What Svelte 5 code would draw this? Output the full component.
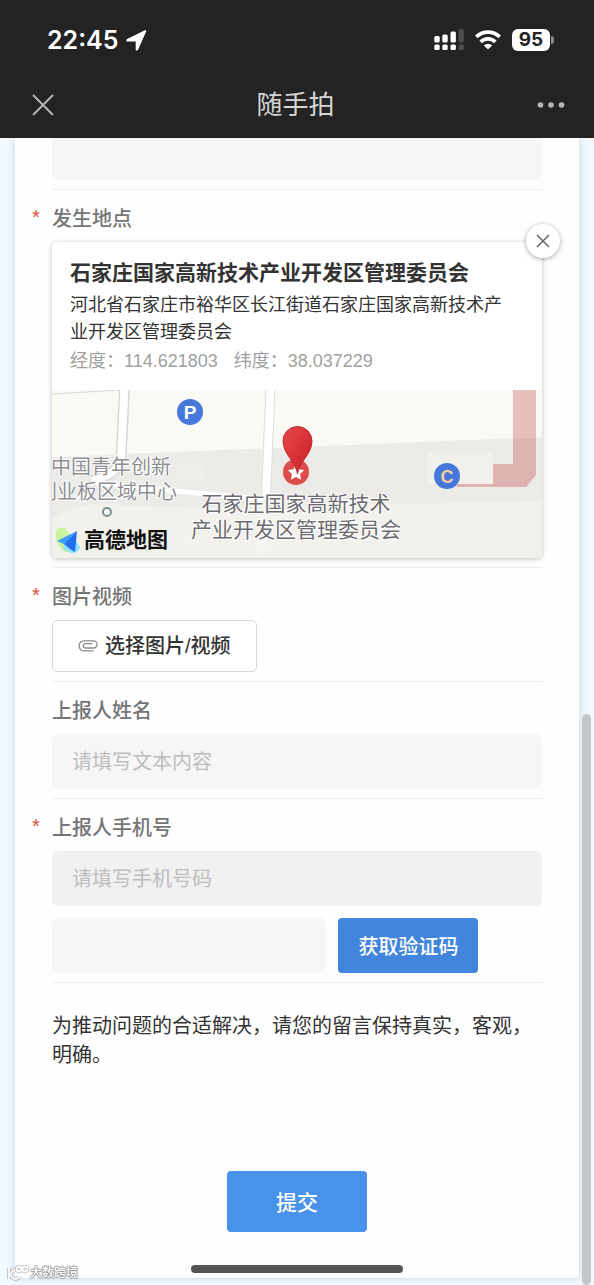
<script lang="ts">
  // Mobile report form shown inside the in-app browser chrome.
  const place = {
    name: '石家庄国家高新技术产业开发区管理委员会',
    address: '河北省石家庄市裕华区长江街道石家庄国家高新技术产业开发区管理委员会',
    lng: '114.621803',
    lat: '38.037229',
  };

  let description = $state('');
  let name = $state('');
  let phone = $state('');
  let code = $state('');
  let located = $state(true);
</script>

{#snippet star(required: boolean)}
  <span class="star" aria-hidden="true">{required ? '*' : ''}</span>
{/snippet}

<header class="chrome">
  <div class="status">
    <span class="time">22:45</span>
    <svg width="21" height="21" viewBox="0 0 21 21" aria-hidden="true">
      <path d="M18.900.3c1-.4 1.700.3 1.300 1.300L12 19.700c-.6 1.200-2.300 1-2.300-.5V11.500H1.600C0 11.500-.3 9.600 1.100 8.900z" fill="#fff" />
    </svg>
    <div class="status-icons">
      <svg width="30" height="22" viewBox="0 0 30 22" aria-hidden="true">
        <g fill="#fff">
          <rect x="0.300" y="7" width="5.400" height="6.500" rx="1.500" />
          <rect x="8.300" y="5.500" width="5.400" height="8" rx="1.500" />
          <rect x="16.500" y="2.500" width="5.400" height="11" rx="1.500" />
          <rect x="0.300" y="15.500" width="5.400" height="5.500" rx="1.500" />
          <rect x="8.300" y="15.500" width="5.400" height="5.500" rx="1.500" />
          <rect x="16.500" y="15.500" width="5.400" height="5.500" rx="1.500" />
        </g>
        <g fill="#4d4d4d">
          <rect x="24.600" y="0" width="5.200" height="13.500" rx="1.500" />
          <rect x="24.600" y="15.500" width="5.200" height="5.500" rx="1.500" />
        </g>
      </svg>
      <svg width="26" height="20" viewBox="0 0 26 20" aria-hidden="true">
        <g fill="none" stroke="#fff" stroke-width="3.800">
          <path d="M1.300 6.900a16.500 16.500 0 0 1 23.400 0" />
          <path d="M5.700 12a10.300 10.300 0 0 1 14.600 0" />
        </g>
        <path d="M13 19.600l-4.200-4.100a6 6 0 0 1 8.400 0z" fill="#fff" />
      </svg>
      <div class="battery">95</div>
    </div>
  </div>
  <nav class="nav">
    <button type="button" class="icon-btn" aria-label="关闭">
      <svg width="22" height="22" viewBox="0 0 22 22"><path d="M1 1l20 20M21 1L1 21" stroke="#b5b5b5" stroke-width="2" /></svg>
    </button>
    <h1>随手拍</h1>
    <button type="button" class="icon-btn" aria-label="更多">
      <svg width="28" height="8" viewBox="0 0 28 8" fill="#b5b5b5">
        <circle cx="3.500" cy="4" r="2.800" /><circle cx="14" cy="4" r="2.800" /><circle cx="24.500" cy="4" r="2.800" />
      </svg>
    </button>
  </nav>
</header>

<form class="sheet" onsubmit={(e) => e.preventDefault()}>
  <div class="field first">
    <div class="body">
      <input class="text tail" bind:value={description} aria-label="问题描述" />
    </div>
  </div>

  <div class="field" role="group" aria-labelledby="place-label">
    {@render star(true)}
    <div class="body">
      <span class="label" id="place-label">发生地点</span>
      {#if located}
        <div class="place">
          <button type="button" class="clear" aria-label="清除地点" onclick={() => (located = false)}>
            <svg width="14" height="14" viewBox="0 0 14 14"><path d="M1 1l12 12M13 1L1 13" stroke="#666" stroke-width="1.500" /></svg>
          </button>
          <div class="place-info">
            <h2>{place.name}</h2>
            <p class="address">{place.address}</p>
            <p class="coords"><span>经度：{place.lng}</span><span>纬度：{place.lat}</span></p>
          </div>
          <svg class="map" viewBox="0 0 490 168" preserveAspectRatio="xMidYMid slice" role="img" aria-label="地图">
            <defs>
              <linearGradient id="pin" x1="0" y1="0" x2="1" y2="1">
                <stop offset="0" stop-color="#e8474b" />
                <stop offset="1" stop-color="#c91f28" />
              </linearGradient>
            </defs>
            <rect width="490" height="168" fill="#faf9f4" />
            <path d="M0 67L250 57L490 47V168H0z" fill="#ecebe8" />
            <path d="M0 128Q35 108 75 116L200 118L342 114L490 111V168H0z" fill="#f2f1ec" />
            <path d="M0 4L68 0" stroke="#d9d8d4" fill="none" />
            <rect x="124" y="75" width="28" height="15" fill="#f0efec" />

            <!-- roads -->
            <path d="M72.500 -2L69 69Q66 84 40 91" fill="none" stroke="#d8d7d5" stroke-width="11" />
            <path d="M72.500 -2L69 69Q66 84 40 91" fill="none" stroke="#fff" stroke-width="8" />
            <path d="M218.500 -2L214 106" fill="none" stroke="#deddda" stroke-width="10" />
            <path d="M218.500 -2L214 106" fill="none" stroke="#fff" stroke-width="8" />
            <path d="M214 106L208 168" fill="none" stroke="#f6f5f2" stroke-width="8" />
            <path d="M40 92L122 101L212 109" fill="none" stroke="#fff" stroke-width="5" />

            <!-- restricted strip -->
            <path d="M461 0H484V85L474 97H405V74H461z" fill="#e8bfbb" />
            <path d="M461 49L484 48V85L474 97H405V74H461z" fill="#dfb4b0" />
            <rect x="375" y="63" width="66" height="31" fill="#f2f0ea" />

            <g class="poi" text-anchor="middle">
              <circle cx="138" cy="22" r="13" fill="#4678dc" />
              <text x="138" y="29" font-size="19" fill="#fff">P</text>
              <circle cx="395" cy="86" r="13" fill="#4678dc" />
              <text x="395" y="93" font-size="18" fill="#f8cf9a">C</text>
            </g>
            <circle cx="55" cy="122" r="4" fill="#fff" stroke="#7d8f8f" stroke-width="2" />
            <circle cx="244" cy="82" r="13" fill="#dd4c4c" />
            <path d="M244 74l2.500 5.200 5.700.8-4.100 4 1 5.700-5.100-2.700-5.100 2.700 1-5.700-4.100-4 5.700-.8z" fill="#fff" />
            <path d="M245.500 84C244 72 231 64 231 51a14.500 14.500 0 0 1 29 0c0 13-13 21-14.500 33z" fill="url(#pin)" stroke="#bd2a2e" stroke-width="1" />

            <g class="area">
              <text x="-1" y="84">中国青年创新</text>
              <text x="-15" y="109">创业板区域中心</text>
            </g>
            <g class="spot" text-anchor="middle">
              <text x="244" y="121">石家庄国家高新技术</text>
              <text x="244" y="147">产业开发区管理委员会</text>
            </g>

            <path d="M6 138h7q9 10 12 24h-13q-10-9-8-21z" fill="#c9f39e" />
            <path d="M16 144l9 8 3 5q-2 7-9 6l-8-4z" fill="#8fe3fb" />
            <path d="M25 141L5 151l7 3z" fill="#3d9bff" />
            <path d="M25 141L12 154l6 5 5 3z" fill="#1f6ef0" />
            <text class="brand" x="32" y="157">高德地图</text>
          </svg>
        </div>
      {/if}
    </div>
  </div>

  <div class="field">
    {@render star(true)}
    <div class="body">
      <label class="label" for="media">图片视频</label>
      <button type="button" class="upload" id="media">
        <svg width="20" height="12" viewBox="0 0 20 12" fill="none" stroke="#8c8c8c" stroke-width="1.300" stroke-linecap="round">
          <path d="M15 10.800H6a5 5 0 0 1 0-10h9.500a3.600 3.600 0 0 1 0 7.200H7.500a2.100 2.100 0 0 1 0-4.300H14" />
        </svg>
        选择图片/视频
      </button>
    </div>
  </div>

  <div class="field">
    {@render star(false)}
    <div class="body">
      <label class="label" for="name">上报人姓名</label>
      <input class="text" id="name" bind:value={name} placeholder="请填写文本内容" />
    </div>
  </div>

  <div class="field">
    {@render star(true)}
    <div class="body">
      <label class="label" for="phone">上报人手机号</label>
      <input class="text phone" id="phone" type="tel" bind:value={phone} placeholder="请填写手机号码" />
      <div class="verify">
        <input class="text" bind:value={code} aria-label="验证码" />
        <button type="button" class="get-code">获取验证码</button>
      </div>
    </div>
  </div>

  <p class="note">为推动问题的合适解决，请您的留言保持真实，客观，明确。</p>
  <button type="submit" class="submit">提交</button>
</form>

<div class="scroll-thumb"></div>
<div class="home-bar"></div>
<div class="watermark">
  <svg width="22" height="16" viewBox="0 0 22 16" fill="none" aria-hidden="true">
    <g stroke="#b4b8ba" stroke-width="3.600">
      <path d="M2 3v11M12.500 11.500A4.500 4.500 0 1 1 8 5" />
      <circle cx="12" cy="4" r="2.500" /><circle cx="18" cy="4" r="2.500" />
    </g>
    <g stroke="#fff" stroke-width="1.800">
      <path d="M2 3v11M12.500 11.500A4.500 4.500 0 1 1 8 5" />
      <circle cx="12" cy="4" r="2.500" /><circle cx="18" cy="4" r="2.500" />
    </g>
  </svg>
  大数跨境
</div>

<style>
  :global(body) {
    margin: 0;
    background: #f2faff;
    font-family: 'Liberation Sans', 'Noto Sans CJK SC', sans-serif;
    font-size: 20px;
    color: #333;
  }
  h1,
  h2,
  p {
    margin: 0;
  }
  button,
  input {
    box-sizing: border-box;
    font: inherit;
    border: 0;
  }
  button {
    padding: 0;
    background: none;
    cursor: pointer;
  }
  svg {
    display: block;
    flex: none;
  }

  .chrome {
    position: relative;
    z-index: 1;
    padding-bottom: 8px;
    background: #232323;
    color: #fff;
  }
  .status {
    display: flex;
    align-items: center;
    gap: 7px;
    height: 80px;
    padding: 0 44px 0 47px;
  }
  .time {
    font: 600 25px/32px Inter, sans-serif;
  }
  .status-icons {
    display: flex;
    align-items: center;
    gap: 11px;
    margin-left: auto;
  }
  .battery {
    position: relative;
    width: 38px;
    border-radius: 6px;
    background: #fff;
    color: #232323;
    font: 700 19px/22px Inter, sans-serif;
    text-align: center;
  }
  .battery::after {
    content: '';
    position: absolute;
    top: 7px;
    right: -4px;
    width: 3px;
    height: 8px;
    border-radius: 0 4px 4px 0;
    background: #8a8a8a;
  }
  .nav {
    display: flex;
    align-items: center;
    justify-content: space-between;
    height: 50px;
    padding: 0 29px 0 32px;
  }
  .nav h1 {
    font-size: 26px;
    font-weight: 400;
    line-height: 36px;
    color: #d5d5d5;
  }

  .sheet {
    display: flex;
    flex-direction: column;
    margin: 0 15px 7px;
    padding: 0 37px 46px 17px;
    background: #fefefe;
    border-radius: 0 0 4px 4px;
    box-shadow: 0 0 8px rgba(60, 100, 140, 0.25);
  }
  .field {
    display: grid;
    grid-template-columns: 20px minmax(0, 1fr);
    line-height: 30px;
  }
  .star {
    padding-top: 12px;
    color: #d9513f;
  }
  .body {
    padding: 14px 0 9px;
    border-bottom: 1px solid #eee;
  }
  .first .body {
    grid-column: 2;
    padding-top: 0;
  }
  .label {
    display: block;
    margin-bottom: 8px;
    font-weight: 500;
    color: #757575;
  }
  .text {
    display: block;
    width: 100%;
    height: 55px;
    padding: 2px 20px 0;
    border-radius: 6px;
    background: #f6f6f6;
    color: #333;
  }
  .text::placeholder {
    color: #bdbdbd;
    opacity: 1;
  }
  .tail {
    height: 42px;
    border-radius: 0 0 6px 6px;
  }
  .phone {
    background: #f1f1f1;
  }

  .place {
    position: relative;
    border-radius: 5px;
    background: #fff;
    box-shadow: 0 1px 5px rgba(0, 0, 0, 0.25);
  }
  .clear {
    position: absolute;
    top: -18px;
    right: -18px;
    display: flex;
    align-items: center;
    justify-content: center;
    width: 34px;
    height: 34px;
    border-radius: 50%;
    background: #fff;
    box-shadow: 0 1px 5px rgba(0, 0, 0, 0.35);
  }
  .place-info {
    padding: 16px 30px 14px 18px;
  }
  .place-info h2 {
    font-size: 21px;
    font-weight: 700;
    line-height: 30px;
  }
  .address {
    margin-top: 4px;
    font-size: 18px;
    line-height: 27px;
  }
  .coords {
    display: flex;
    gap: 16px;
    font-size: 18px;
    line-height: 30px;
    color: #a0a0a0;
  }
  .map {
    width: 100%;
    height: 168px;
    border-radius: 0 0 5px 5px;
  }
  .poi {
    font-weight: 700;
  }
  .area,
  .spot {
    paint-order: stroke;
    stroke: #fff;
    stroke-width: 2px;
  }
  .area {
    font-size: 20px;
    fill: #8e8e92;
  }
  .spot {
    font-size: 21px;
    fill: #6c6c70;
  }
  .brand {
    font-size: 21px;
    font-weight: 700;
    fill: #111;
  }

  .upload {
    display: flex;
    align-items: center;
    gap: 7px;
    height: 52px;
    padding: 0 25px;
    border: 1px solid #d8d8d8;
    border-radius: 5px;
    background: #fff;
    color: #333;
    font-weight: 500;
  }
  .verify {
    display: flex;
    gap: 12px;
    margin-top: 12px;
  }
  .verify .text {
    width: 56%;
  }
  .get-code,
  .submit {
    width: 140px;
    border-radius: 4px;
    color: #fff;
    font-weight: 500;
  }
  .get-code {
    padding-top: 2px;
    background: #4285dc;
  }
  .note {
    margin: 29px 0 101px 20px;
    line-height: 29px;
  }
  .submit {
    align-self: center;
    height: 61px;
    margin-left: 20px;
    padding-bottom: 2px;
    background: #4892e9;
    font-size: 21px;
  }

  .scroll-thumb {
    position: fixed;
    top: 714px;
    right: 3px;
    bottom: 0;
    width: 9px;
    border-radius: 5px;
    background: #c5c6c7;
  }
  .home-bar {
    position: fixed;
    bottom: 12px;
    left: 50%;
    width: 212px;
    height: 8px;
    margin-left: -106px;
    border-radius: 4px;
    background: #555;
  }
  .watermark {
    position: fixed;
    bottom: 3px;
    left: 7px;
    display: flex;
    align-items: center;
    gap: 1px;
    font-size: 12px;
    font-weight: 500;
    line-height: 18px;
    color: #fff;
    text-shadow:
      1px 0 1px #999,
      -1px 0 1px #999,
      0 1px 1px #999,
      0 -1px 1px #999;
  }
</style>
